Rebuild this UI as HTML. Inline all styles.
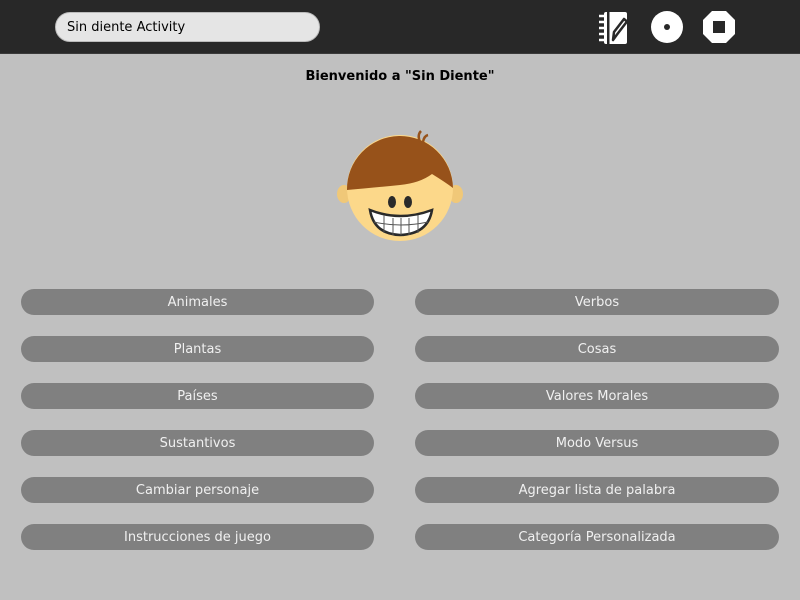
<!DOCTYPE html>
<html><head><style>
body{margin:0;width:800px;height:600px;background:#c0c0c0;font-family:"DejaVu Sans","Liberation Sans",sans-serif;overflow:hidden;position:relative}
#tb{position:absolute;left:0;top:0;width:800px;height:53px;background:#282828;border-bottom:1px solid #3a3a3a}
#search{position:absolute;left:55px;top:12px;width:265px;height:30px;border-radius:15px;background:#e5e5e5;border:1px solid #bbb;box-sizing:border-box;font-size:13px;line-height:30px;padding-left:11px;color:#000}
h1{position:absolute;top:69px;left:0;width:800px;text-align:center;font-size:13px;font-weight:bold;margin:0}
.b{position:absolute;height:26px;border-radius:13px;background:#808080;color:#f0f0f0;font-size:13px;text-align:center;line-height:28px}
.l{left:21px;width:353px}.r{left:415px;width:364px}
</style></head><body>
<div id="tb">
<div id="search">Sin diente Activity</div>
<svg style="position:absolute;left:596px;top:10px" width="36" height="36" viewBox="0 0 36 36">
<rect x="8" y="2" width="23" height="32" rx="2" fill="#fff"/>
<g stroke="#fff" stroke-width="2.5" fill="none"><path d="M3 6h6M3 12h6M3 18h6M3 24h6M3 30h6"/></g>
<rect x="11" y="2" width="2.5" height="32" fill="#282828"/>
<path d="M17 30l1-8 10-13 3 2.5-10 13z" fill="#fff" stroke="#282828" stroke-width="2.5" stroke-linejoin="round"/>
</svg>
<svg style="position:absolute;left:650px;top:10px" width="34" height="34" viewBox="0 0 34 34"><circle cx="17" cy="17" r="16" fill="#fff"/><circle cx="17" cy="17" r="3" fill="#282828"/></svg>
<svg style="position:absolute;left:702px;top:10px" width="34" height="34" viewBox="0 0 34 34"><polygon points="10,1 24,1 33,10 33,24 24,33 10,33 1,24 1,10" fill="#fff"/><rect x="11" y="11" width="12" height="12" fill="#282828"/></svg>
</div>
<h1>Bienvenido a "Sin Diente"</h1>
<svg style="position:absolute;left:330px;top:125px" width="140" height="125" viewBox="330 125 140 125">
<ellipse cx="344" cy="194" rx="7" ry="9" fill="#f0c878"/>
<ellipse cx="456" cy="194" rx="7" ry="9" fill="#f0c878"/>
<circle cx="400" cy="188" r="53" fill="#fcd88a"/>
<path d="M347 190 A53 53 0 0 1 453 188 Q445 182 432 174 Q420 183 400 185 Q370 188 347 190z" fill="#97521a"/>
<path d="M420 142 Q417 135 421 131 M423 142 Q424 136 428 135" stroke="#97521a" stroke-width="2.5" fill="none"/>
<ellipse cx="392" cy="202" rx="4" ry="6" fill="#2a2a2a"/>
<ellipse cx="408" cy="202" rx="4" ry="6" fill="#2a2a2a"/>
<path d="M370 210 Q400 222 432 210 Q428 234 400 235 Q374 234 370 210z" fill="#fff" stroke="#2a2a2a" stroke-width="2.5"/>
<path d="M374 222 Q400 228 428 222 M384 215 V233 M393 218 V235 M401 218 V235 M409 218 V235 M418 215 V233" stroke="#555" stroke-width="1" fill="none"/>
</svg>
<div class="b l" style="top:289px">Animales</div><div class="b r" style="top:289px">Verbos</div>
<div class="b l" style="top:336px">Plantas</div><div class="b r" style="top:336px">Cosas</div>
<div class="b l" style="top:383px">Países</div><div class="b r" style="top:383px">Valores Morales</div>
<div class="b l" style="top:430px">Sustantivos</div><div class="b r" style="top:430px">Modo Versus</div>
<div class="b l" style="top:477px">Cambiar personaje</div><div class="b r" style="top:477px">Agregar lista de palabra</div>
<div class="b l" style="top:524px">Instrucciones de juego</div><div class="b r" style="top:524px">Categoría Personalizada</div>
</body></html>
